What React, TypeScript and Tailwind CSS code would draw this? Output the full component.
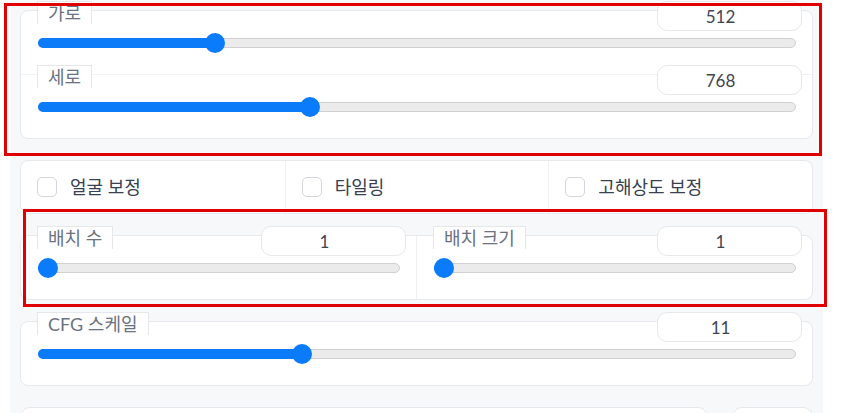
import React from "react";

type SliderProps = { value: number; min: number; max: number };

function Slider({ value, min, max }: SliderProps) {
  const frac = (value - min) / (max - min);
  return (
    <div className="relative mt-[2px] ml-[1px] flex h-[20px] items-center">
      <div className="relative h-[10px] w-full">
        <div className="absolute inset-0 rounded-full border border-[#d0d0d0] bg-[#ebebeb]" />
        <div
          className="absolute inset-y-0 left-0 rounded-full bg-[#0b7bf7]"
          style={{ width: `calc(${frac} * (100% - 20px) + 10px)` }}
        />
        <div
          className="absolute top-[-5px] h-[20px] w-[20px] rounded-full bg-[#0a7bfa]"
          style={{ left: `calc(${frac} * (100% - 20px))` }}
        />
      </div>
    </div>
  );
}

type BlockProps = {
  label: string;
  value: number;
  min: number;
  max: number;
  className?: string;
};

function SliderBlock({ label, value, min, max, className = "" }: BlockProps) {
  return (
    <div className={`px-[16px] pb-[21px] ${className}`}>
      <div className="-mt-[10px] -mr-[6px] flex h-[30px] items-start justify-between">
        <span className="h-[23px] border-x border-t border-[#e5e7eb] bg-white px-[10px] text-[18px] leading-[22px] text-[#6b7280]">
          {label}
        </span>
        <div className="h-[30px] w-[145px] rounded-[10px] border border-[#e7e8eb] bg-white pr-[18px] text-center text-[17px] leading-[29px] text-[#3f4652]">
          {value}
        </div>
      </div>
      <Slider value={value} min={min} max={max} />
    </div>
  );
}

function Check({ label, className = "" }: { label: string; className?: string }) {
  return (
    <div className={`flex items-center gap-[13px] px-[16px] ${className}`}>
      <span className="h-[20px] w-[20px] shrink-0 rounded-[5px] border border-[#d4d6db] bg-white" />
      <span className="text-[18px] leading-[20px] text-[#374151]">{label}</span>
    </div>
  );
}

export default function App() {
  return (
    <div className="relative h-[413px] w-[841px] overflow-hidden bg-white font-['Lato','Noto_Sans_CJK_KR',sans-serif]">
      <div className="ml-[10px] flex h-full w-[813px] flex-col bg-[#f7f8fa] px-[10px]">
        <div className="mt-[10px] shrink-0 rounded-[8px] border border-[#e8e9ec] bg-white">
          <SliderBlock label="가로" value={512} min={64} max={2048} />
          <SliderBlock label="세로" value={768} min={64} max={2048} className="border-t border-[#f0f1f3]" />
        </div>

        <div className="mt-[21px] grid h-[54px] shrink-0 grid-cols-3 rounded-[8px] border border-[#e8e9ec] bg-white">
          <Check label="얼굴 보정" />
          <Check label="타일링" className="border-l border-[#f0f1f3]" />
          <Check label="고해상도 보정" className="border-l border-[#f0f1f3]" />
        </div>

        <div className="mt-[21px] flex shrink-0 rounded-[8px] border border-[#e8e9ec] bg-white">
          <SliderBlock label="배치 수" value={1} min={1} max={8} className="flex-1" />
          <SliderBlock label="배치 크기" value={1} min={1} max={8} className="flex-1 border-l border-[#eef0f2]" />
        </div>

        <div className="mt-[21px] shrink-0 rounded-[8px] border border-[#e8e9ec] bg-white">
          <SliderBlock label="CFG 스케일" value={11} min={1} max={30} />
        </div>

        <div className="mt-[21px] flex shrink-0 gap-[24px]">
          <div className="h-[44px] flex-1 rounded-[10px] border border-[#e5e7eb] bg-white" />
          <div className="h-[44px] w-[81px] rounded-[10px] border border-[#e5e7eb] bg-white" />
        </div>
      </div>

      <div className="pointer-events-none absolute left-[4px] top-[3px] h-[153px] w-[818px] border-[3px] border-[#e00000]" />
      <div className="pointer-events-none absolute left-[23px] top-[209px] h-[98px] w-[804px] border-[3px] border-[#e00000]" />
    </div>
  );
}
